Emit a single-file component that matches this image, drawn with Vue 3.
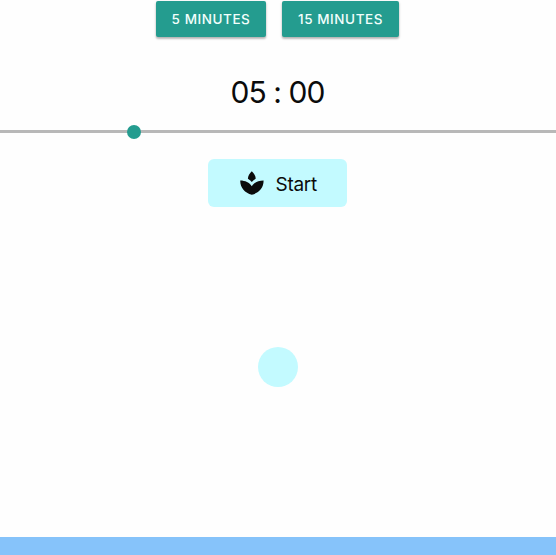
<script setup>
import { computed, ref } from 'vue'

const presets = [5, 15]
const minutes = ref(5)
const maxMinutes = 21
const clock = computed(() => `${String(minutes.value).padStart(2, '0')} : 00`)
const position = computed(() => `${(minutes.value / maxMinutes) * 100}%`)
</script>

<template>
  <main class="timer">
    <div class="presets">
      <button v-for="p in presets" :key="p" class="preset" @click="minutes = p">{{ p }} minutes</button>
    </div>
    <div class="clock">{{ clock }}</div>
    <div class="slider">
      <span class="thumb" :style="{ left: position }"></span>
    </div>
    <button class="start">
      <svg class="lotus" viewBox="0 0 24 24" aria-hidden="true">
        <path d="M11.800 0.300C9.500 2.500 8 5 7.900 7.700C9.400 8.500 10.800 9.600 11.800 10.900C12.800 9.600 14.200 8.500 15.700 7.700C15.600 5 14.100 2.500 11.800 0.300Z" />
        <path d="M0.200 9.500C5.200 9.500 9.500 11.600 11.800 15.200C14.100 11.600 18.600 9.500 23.600 9.500C23.600 17 18.800 22 11.800 23.700C5 22 0.200 17 0.200 9.500Z" />
      </svg>
      <span class="label">Start</span>
    </button>
    <div class="stage"><div class="breath"></div></div>
    <footer class="footer"></footer>
  </main>
</template>

<style>
body {
  margin: 0;
  background: #fefefe;
}
</style>

<style scoped>
.timer {
  display: flex;
  flex-direction: column;
  align-items: center;
  height: 555px;
  overflow: hidden;
  font-family: Inter, sans-serif;
  color: #0b0b0b;
}
button {
  border: 0;
  margin: 0;
  font-family: inherit;
}
.presets {
  display: flex;
  gap: 16px;
  padding-top: 1px;
  margin-right: 1px;
}
.preset {
  height: 36px;
  width: 110px;
  padding: 0;
  border-radius: 2px;
  background: #249c8f;
  color: #f2fffc;
  font-size: 13.5px;
  font-weight: 500;
  letter-spacing: 0.55px;
  text-transform: uppercase;
  white-space: nowrap;
  box-shadow: 0 2px 2px rgba(0, 0, 0, 0.2), 0 1px 3px rgba(0, 0, 0, 0.16);
}
.preset + .preset {
  width: 117px;
}
.clock {
  height: 40px;
  margin: 35px 1px 0 0;
  line-height: 40px;
  font-size: 30px;
  letter-spacing: -0.95px;
  white-space: pre;
}
.slider {
  position: relative;
  width: 100%;
  height: 3px;
  margin-top: 18px;
  background: #b8b8b8;
}
.thumb {
  position: absolute;
  top: -5px;
  width: 14px;
  height: 14px;
  margin-left: -5px;
  border-radius: 50%;
  background: #249c8f;
}
.start {
  display: flex;
  align-items: center;
  justify-content: flex-start;
  gap: 11.5px;
  flex: none;
  width: 139px;
  height: 48px;
  margin: 26px 1px 0 0;
  padding: 0 0 0 32px;
  border-radius: 6px;
  background: #c3faff;
  color: #0b0b0b;
  font-size: 19px;
}
.lotus {
  width: 24px;
  height: 24px;
  fill: #0b0b0b;
}
.label {
  padding-top: 2px;
  letter-spacing: -0.3px;
}
.stage {
  display: flex;
  flex: 1;
  padding-top: 140px;
}
.breath {
  width: 40px;
  height: 40px;
  border-radius: 50%;
  background: #c3faff;
}
.footer {
  flex: none;
  width: 100%;
  height: 18px;
  background: #86c3fa;
}
</style>
